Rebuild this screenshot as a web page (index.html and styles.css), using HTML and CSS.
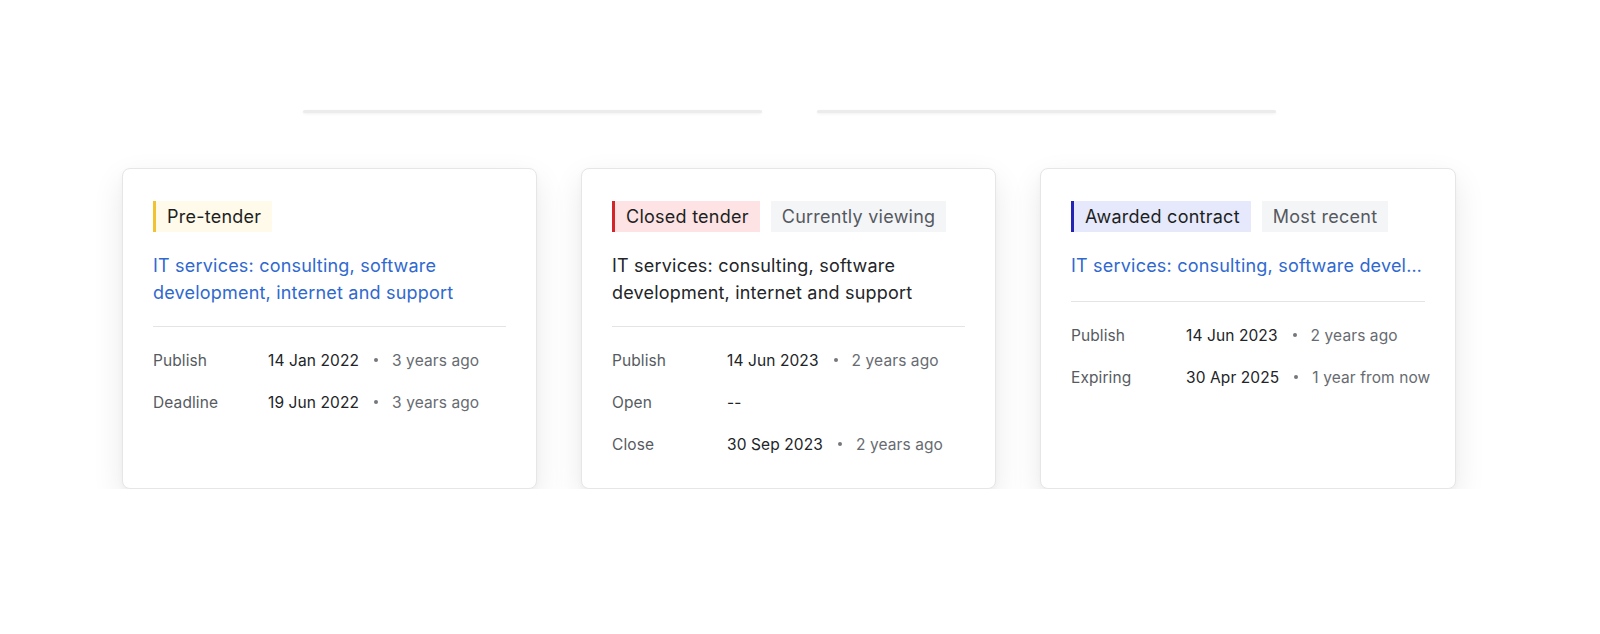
FILE: index.html
```html
<!DOCTYPE html>
<html lang="en">
<head>
    <meta charset="UTF-8">
    <meta name="viewport" content="width=device-width, initial-scale=1.0">
    <title>Notice history</title>
    <link rel="stylesheet" href="styles.css">
</head>
<body>
    <div class="wrap">
        <div class="tabs">
            <div class="tab-line"></div>
            <div class="tab-line"></div>
        </div>

        <div class="cards">
            <div class="card">
                <div class="tags">
                    <span class="tag tag-pre">Pre-tender</span>
                </div>
                <a class="title link" href="#">IT services: consulting, software development, internet and support</a>
                <div class="rows">
                    <div class="row">
                        <span class="label">Publish</span>
                        <span class="date">14 Jan 2022</span>
                        <span class="dot"></span>
                        <span class="ago">3 years ago</span>
                    </div>
                    <div class="row">
                        <span class="label">Deadline</span>
                        <span class="date">19 Jun 2022</span>
                        <span class="dot"></span>
                        <span class="ago">3 years ago</span>
                    </div>
                </div>
            </div>

            <div class="card">
                <div class="tags">
                    <span class="tag tag-closed">Closed tender</span>
                    <span class="tag tag-note">Currently viewing</span>
                </div>
                <div class="title">IT services: consulting, software development, internet and support</div>
                <div class="rows">
                    <div class="row">
                        <span class="label">Publish</span>
                        <span class="date">14 Jun 2023</span>
                        <span class="dot"></span>
                        <span class="ago">2 years ago</span>
                    </div>
                    <div class="row">
                        <span class="label">Open</span>
                        <span class="date">--</span>
                    </div>
                    <div class="row">
                        <span class="label">Close</span>
                        <span class="date">30 Sep 2023</span>
                        <span class="dot"></span>
                        <span class="ago">2 years ago</span>
                    </div>
                </div>
            </div>

            <div class="card">
                <div class="tags">
                    <span class="tag tag-awarded">Awarded contract</span>
                    <span class="tag tag-note">Most recent</span>
                </div>
                <a class="title link one-line" href="#">IT services: consulting, software development, internet and support</a>
                <div class="rows">
                    <div class="row">
                        <span class="label">Publish</span>
                        <span class="date">14 Jun 2023</span>
                        <span class="dot"></span>
                        <span class="ago">2 years ago</span>
                    </div>
                    <div class="row">
                        <span class="label">Expiring</span>
                        <span class="date">30 Apr 2025</span>
                        <span class="dot"></span>
                        <span class="ago">1 year from now</span>
                    </div>
                </div>
            </div>
        </div>
    </div>
</body>
</html>
```

FILE: styles.css
```css
body {
    margin: 0;
    background-color: #ffffff;
    font-family: Inter, "Noto Sans", sans-serif;
    color: #1f2124;
}
.wrap {
    width: 1334px;
    margin-left: 122px;
}
.tabs {
    display: flex;
    justify-content: center;
    gap: 55px;
    padding-top: 110px;
}
.tab-line {
    width: 459px;
    height: 3px;
    border-radius: 2px;
    background-color: #ececec;
    box-shadow: 0 1px 3px rgba(0, 0, 0, 0.06);
}
.cards {
    display: flex;
    gap: 44px;
    margin-top: 55px;
}
.card {
    width: 416px;
    height: 321px;
    box-sizing: border-box;
    padding: 32px 30px;
    background-color: #fff;
    border: 1px solid #e6e6e6;
    border-radius: 8px;
    box-shadow: 0 12px 32px rgba(0, 0, 0, 0.09), 0 2px 6px rgba(0, 0, 0, 0.03);
}
.tags {
    display: flex;
    gap: 11px;
}
.tag {
    height: 31px;
    line-height: 31px;
    padding: 0 11px;
    font-size: 18px;
    letter-spacing: 0.25px;
    color: #1d1f22;
}
.tag-pre {
    border-left: 3px solid #f1c232;
    background-color: #fffaea;
}
.tag-closed {
    border-left: 3px solid #d3262b;
    background-color: #fde3e4;
}
.tag-awarded {
    border-left: 3px solid #2424b4;
    background-color: #e6e8fc;
}
.tag-note {
    background-color: #f4f5f7;
    color: #55595f;
}
.title {
    display: block;
    margin-top: 20px;
    padding-bottom: 20px;
    border-bottom: 1px solid #e3e4e6;
    font-size: 18px;
    letter-spacing: 0.2px;
    line-height: 27px;
    color: #232528;
    text-decoration: none;
}
.link {
    color: #2f69cf;
}
.one-line {
    white-space: nowrap;
    overflow: hidden;
    text-overflow: ellipsis;
    padding-bottom: 22px;
}
.rows {
    display: flex;
    flex-direction: column;
    gap: 20px;
    margin-top: 22px;
}
.row {
    display: flex;
    align-items: center;
    height: 22px;
    font-size: 15.5px;
    letter-spacing: 0.1px;
    white-space: nowrap;
}
.row span {
    flex-shrink: 0;
}
.label {
    width: 115px;
    color: #575b61;
}
.date {
    color: #222427;
}
.dot {
    width: 4px;
    height: 4px;
    margin: 0 14px 0 15px;
    border-radius: 50%;
    background-color: #74777c;
}
.ago {
    color: #676b71;
}
```
